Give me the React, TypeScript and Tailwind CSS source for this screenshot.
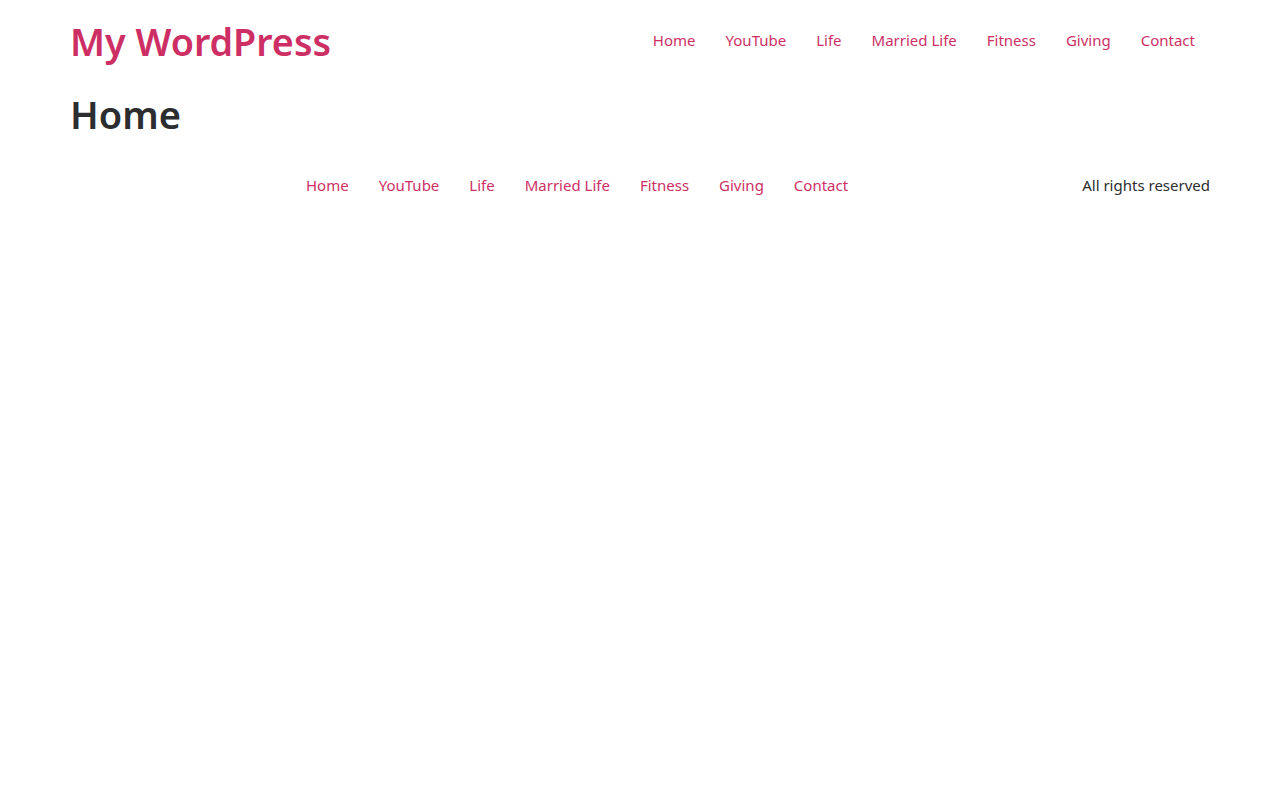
const NAV = ['Home', 'YouTube', 'Life', 'Married Life', 'Fitness', 'Giving', 'Contact'];

function NavLinks() {
  return (
    <ul className="flex items-center">
      {NAV.map(item => (
        <li key={item}>
          <a href="#" className="block px-[15px] text-[#cd2f65] hover:underline">
            {item}
          </a>
        </li>
      ))}
    </ul>
  );
}

export default function App() {
  return (
    <div className="min-h-screen bg-white text-[15px] text-[#2b2d2f] [font-family:'Noto_Sans',sans-serif]">
      {/* Header */}
      <header className="flex items-center justify-between pl-[70px] pr-[70px] pt-[15px]">
        <a href="#" className="text-[37.7px] font-semibold leading-[54px] text-[#cd2f65]">
          My WordPress
        </a>
        <nav className="-mt-[4px]">
          <NavLinks />
        </nav>
      </header>

      {/* Page title */}
      <main className="px-[70px] pt-[20px]">
        <h1 className="text-[38px] font-semibold leading-[50px]">Home</h1>
      </main>

      {/* Footer */}
      <footer className="flex items-center pl-[291px] pr-[70px] pt-[35px]">
        <nav className="flex-1">
          <NavLinks />
        </nav>
        <p>All rights reserved</p>
      </footer>
    </div>
  );
}
